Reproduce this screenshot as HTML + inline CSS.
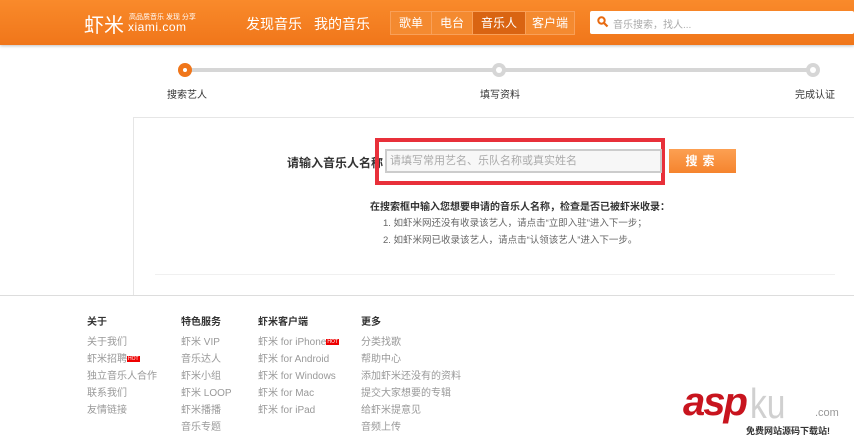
<!DOCTYPE html>
<html><head><meta charset="utf-8"><style>
*{margin:0;padding:0;box-sizing:border-box}
body{width:854px;height:442px;overflow:hidden;background:#fff;font-family:"Liberation Sans","Noto Sans CJK SC",sans-serif;position:relative;color:#333}
.a{position:absolute;white-space:nowrap}
#hd{position:absolute;left:0;top:0;width:854px;height:45px;background:linear-gradient(#f98a2b,#f0761a);box-shadow:0 1px 3px rgba(0,0,0,.25)}
.nav{color:#fff;font-size:14px}
.tabs{position:absolute;left:390px;top:11px;height:24px;display:flex;border:1px solid #f9a058;background:#f48a30}
.tabs div{color:#fff;font-size:12px;line-height:22px;padding:0 8px;border-right:1px solid #f9a058}
.tabs div.on{background:#d96412}
.f a{display:block;color:#999;font-size:10px;line-height:17px}
.f b{display:block;color:#333;font-size:10px;margin-bottom:6px}
sup{background:#e00;color:#fff;font-size:5px;padding:0 1px;vertical-align:top}
</style></head><body>
<div id="hd">
<div class="a" style="left:84px;top:9px;color:#fff;font-size:20px">虾米</div>
<div class="a" style="left:129px;top:12px;color:#fff;font-size:7px">高品质音乐 发现 分享</div>
<div class="a" style="left:128px;top:20px;color:#fff;font-size:12px;letter-spacing:.5px">xiami.com</div>
<div class="a nav" style="left:246px;top:14px">发现音乐</div>
<div class="a nav" style="left:314px;top:14px">我的音乐</div>
<div class="tabs"><div>歌单</div><div>电台</div><div class="on">音乐人</div><div style="border:0;padding:0 6px">客户端</div></div>
<div class="a" style="left:590px;top:11px;width:264px;height:23px;background:#fff;border-radius:2px"></div>
<svg class="a" style="left:597px;top:16px" width="12" height="12" viewBox="0 0 12 12"><circle cx="4.5" cy="4.5" r="3.2" fill="none" stroke="#e86a10" stroke-width="2"/><path d="M7 7l3.5 3.5" stroke="#e86a10" stroke-width="2.2"/></svg>
<div class="a" style="left:613px;top:16px;color:#aaa;font-size:10px">音乐搜索，找人...</div>
</div>
<div class="a" style="left:185px;top:68px;width:628px;height:4px;background:#d6d6d6"></div>
<div class="a" style="left:178px;top:63px;width:14px;height:14px;border-radius:50%;background:#f0761a"></div>
<div class="a" style="left:183px;top:68px;width:4px;height:4px;border-radius:50%;background:#fff"></div>
<div class="a" style="left:492px;top:63px;width:14px;height:14px;border-radius:50%;background:#d6d6d6"></div>
<div class="a" style="left:496px;top:67px;width:6px;height:6px;border-radius:50%;background:#fff"></div>
<div class="a" style="left:806px;top:63px;width:14px;height:14px;border-radius:50%;background:#d6d6d6"></div>
<div class="a" style="left:810px;top:67px;width:6px;height:6px;border-radius:50%;background:#fff"></div>
<div class="a" style="left:167px;top:86px;font-size:10px">搜索艺人</div>
<div class="a" style="left:480px;top:86px;font-size:10px">填写资料</div>
<div class="a" style="left:795px;top:86px;font-size:10px">完成认证</div>
<div class="a" style="left:133px;top:117px;width:721px;height:179px;border-top:1px solid #e6e6e6;border-left:1px solid #e6e6e6"></div>
<div class="a" style="left:155px;top:274px;width:680px;height:1px;background:#f0f0f0"></div>
<div class="a" style="left:0;top:295px;width:854px;height:1px;background:#ddd"></div>
<div class="a" style="left:287px;top:154px;font-size:12px;font-weight:bold">请输入音乐人名称</div>
<div class="a" style="left:375px;top:138px;width:290px;height:47px;border:4px solid #e8303a"></div>
<div class="a" style="left:385px;top:149px;width:277px;height:24px;border:2px solid #ccc;background:#f7f7f7;color:#aaa;font-size:11px;line-height:20px;padding-left:3px">请填写常用艺名、乐队名称或真实姓名</div>
<div class="a" style="left:669px;top:149px;width:67px;height:24px;background:linear-gradient(#fca052,#f5842e);color:#fff;font-size:12px;font-weight:bold;text-align:center;line-height:24px;letter-spacing:5px">搜索</div>
<div class="a" style="left:370px;top:198px;font-size:10px;font-weight:bold">在搜索框中输入您想要申请的音乐人名称，检查是否已被虾米收录：</div>
<div class="a" style="left:383px;top:215px;font-size:9.5px;color:#666">1. 如虾米网还没有收录该艺人，请点击“立即入驻”进入下一步；</div>
<div class="a" style="left:383px;top:232px;font-size:9.5px;color:#666">2. 如虾米网已收录该艺人，请点击“认领该艺人”进入下一步。</div>
<div class="a f" style="left:87px;top:313px"><b>关于</b><a>关于我们</a><a>虾米招聘<sup>HOT</sup></a><a>独立音乐人合作</a><a>联系我们</a><a>友情链接</a></div>
<div class="a f" style="left:181px;top:313px"><b>特色服务</b><a>虾米 VIP</a><a>音乐达人</a><a>虾米小组</a><a>虾米 LOOP</a><a>虾米播播</a><a>音乐专题</a></div>
<div class="a f" style="left:258px;top:313px"><b>虾米客户端</b><a>虾米 for iPhone<sup>HOT</sup></a><a>虾米 for Android</a><a>虾米 for Windows</a><a>虾米 for Mac</a><a>虾米 for iPad</a></div>
<div class="a f" style="left:361px;top:313px"><b>更多</b><a>分类找歌</a><a>帮助中心</a><a>添加虾米还没有的资料</a><a>提交大家想要的专辑</a><a>给虾米提意见</a><a>音频上传</a></div>
<div class="a" style="left:683px;top:380px;font-size:40px;font-weight:bold;font-style:italic;color:#c8141e;letter-spacing:-2px">asp</div>
<div class="a" style="left:750px;top:380px;font-size:42px;color:#d0d0d0;transform:scaleX(.8);transform-origin:left">ku</div>
<div class="a" style="left:815px;top:407px;font-size:11px;color:#999">.com</div>
<div class="a" style="left:746px;top:424px;font-size:9px;color:#333;font-weight:bold">免费网站源码下载站!</div>
</body></html>
